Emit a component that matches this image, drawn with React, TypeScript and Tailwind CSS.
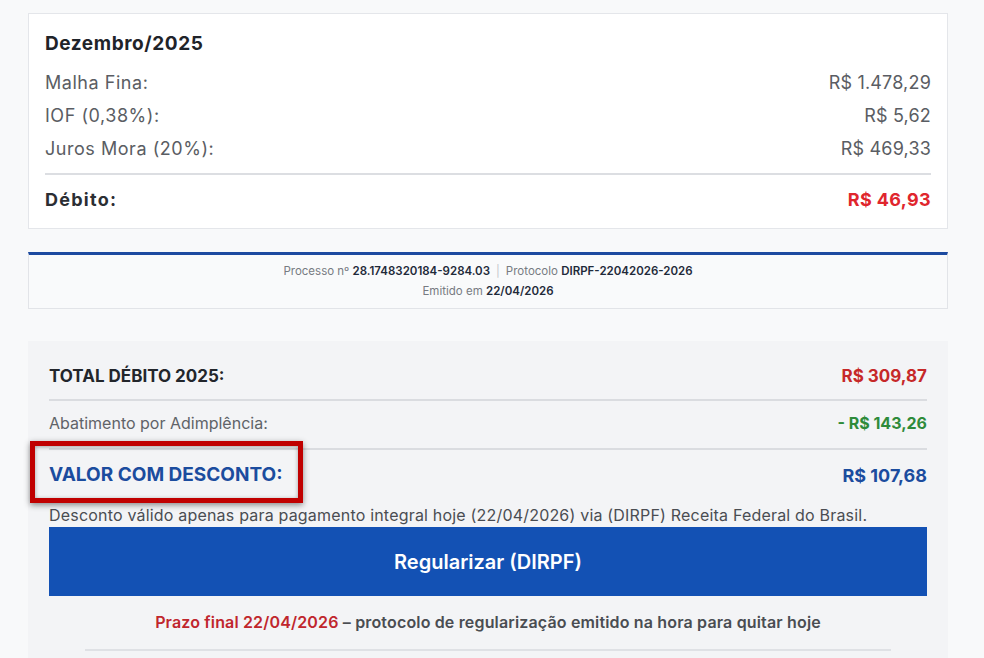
import React from 'react'

const rows = [
  { label: 'Malha Fina:', value: 'R$ 1.478,29' },
  { label: 'IOF (0,38%):', value: 'R$ 5,62' },
  { label: 'Juros Mora (20%):', value: 'R$ 469,33' },
]

export default function App() {
  return (
    <div
      className="min-h-[658px] bg-[#f8f9fa] pl-[28px] pr-[36px] pt-[13px] overflow-hidden"
      style={{ fontFamily: 'Inter, "Noto Sans", sans-serif' }}
    >
      {/* Month breakdown */}
      <div className="bg-white border border-[#e4e6ea] pt-[18px] pb-[12px] px-[16px]">
        <h2 className="h-[24px] leading-[24px] text-[19px] tracking-[0.03em] font-bold text-[#1f2329]">
          Dezembro/2025
        </h2>
        <div className="mt-[10px]">
          {rows.map((r) => (
            <div
              key={r.label}
              className="h-[33px] flex items-center justify-between text-[18px] tracking-[0.03em] text-[#5a5d63]"
            >
              <span>{r.label}</span>
              <span className="tracking-[0.01em]">{r.value}</span>
            </div>
          ))}
        </div>
        <div className="mt-[8px] border-t-2 border-[#dcdee2]" />
        <div className="mt-[7px] h-[34px] flex items-center justify-between text-[18px] font-bold">
          <span className="text-[#2b2e33] tracking-[0.07em]">Débito:</span>
          <span className="text-[#e0262d] tracking-[0.02em]">R$ 46,93</span>
        </div>
      </div>

      {/* Protocol info */}
      <div className="mt-[23px] bg-[#f9fafb] border border-[#e2e4e8] border-t-[3px] border-t-[#1c4aa0] pt-[6px] pb-[7px] text-center text-[11.5px] leading-[20px] text-[#777b82]">
        <div>
          Processo nº <span className="font-semibold text-[#1f2a3a]">28.1748320184-9284.03</span>
          <span className="mx-[6px] text-[#c4c7cc]">|</span>
          Protocolo <span className="font-semibold text-[#1f2a3a]">DIRPF-22042026-2026</span>
        </div>
        <div>
          Emitido em <span className="font-semibold text-[#1f2a3a]">22/04/2026</span>
        </div>
      </div>

      {/* Totals */}
      <div className="mt-[32px] bg-[#f3f4f6] pt-[16px] px-[21px] pb-[20px]">
        <div className="h-[44px] pb-[3px] flex items-center justify-between border-b-2 border-[#dadce0]">
          <span className="text-[17px] font-bold text-[#22262b]">TOTAL DÉBITO 2025:</span>
          <span className="text-[17px] font-bold text-[#c62828]">R$ 309,87</span>
        </div>
        <div className="h-[49px] pb-[3px] flex items-center justify-between border-b-2 border-[#dadce0]">
          <span className="text-[16px] text-[#5f6368]">Abatimento por Adimplência:</span>
          <span className="text-[16px] font-bold text-[#2e8b3a]">- R$ 143,26</span>
        </div>
        <div className="relative h-[50px] flex items-center justify-between">
          <span className="text-[19px] font-bold text-[#1b4c9e]">VALOR COM DESCONTO:</span>
          <span className="text-[18px] font-bold text-[#1b4c9e]">R$ 107,68</span>
          {/* annotation frame */}
          <div className="absolute left-[-19px] top-[-9px] w-[273px] h-[62px] border-[5px] border-[#c00000] shadow-[0_2px_6px_rgba(0,0,0,0.45),inset_0_1px_4px_rgba(0,0,0,0.35)] pointer-events-none" />
        </div>
        <p className="pt-[4px] text-[16px] leading-[23px] tracking-[0.012em] text-[#4a4d52] whitespace-nowrap">
          Desconto válido apenas para pagamento integral hoje (22/04/2026) via (DIRPF) Receita Federal do Brasil.
        </p>
        <button className="w-full h-[69px] bg-[#1351b4] text-white text-[20px] font-semibold">
          Regularizar (DIRPF)
        </button>
        <p className="mt-[16px] text-center text-[16px] leading-[20px] tracking-[0.01em] font-semibold text-[#4a4d52]">
          <span className="text-[#c0262d]">Prazo final 22/04/2026</span> – protocolo de regularização emitido na hora para quitar hoje
        </p>
        <div className="mt-[17px] mx-[36px] border-t-2 border-[#dfe1e5]" />
      </div>
    </div>
  )
}
